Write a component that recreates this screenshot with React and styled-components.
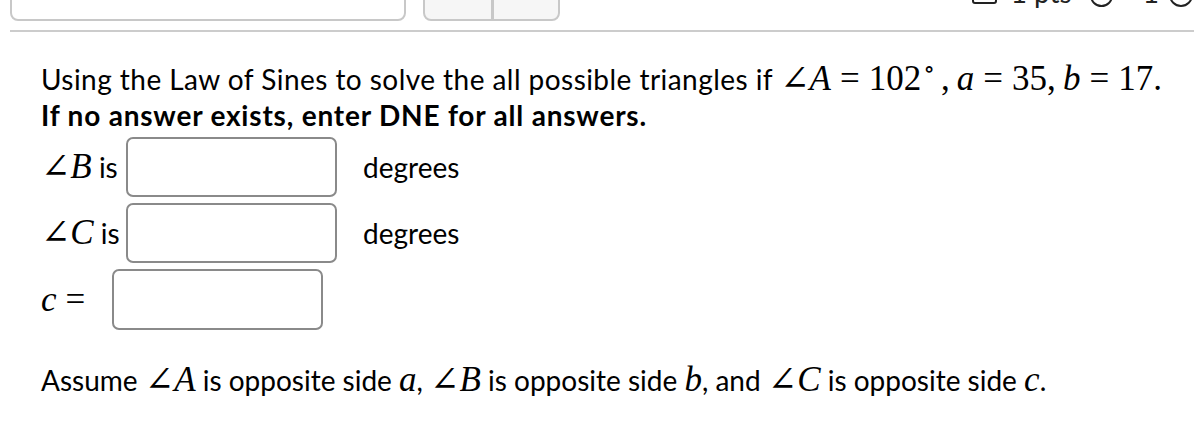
import React from 'react';
import styled, { createGlobalStyle } from 'styled-components';

const GlobalStyle = createGlobalStyle`
  body {
    margin: 0;
    background: #fff;
    color: #000;
    font-family: Lato, "Noto Sans", sans-serif;
  }
`;

const Page = styled.div`
  width: 1194px;
  height: 422px;
  overflow: hidden;
`;

const TopBar = styled.div`
  display: flex;
  align-items: flex-end;
  height: 21px;
  padding-left: 10px;
`;

const SelectBox = styled.div`
  width: 396px;
  height: 40px;
  flex-shrink: 0;
  border: 2px solid #c8c8c8;
  border-radius: 8px;
  background: #fff;
  box-sizing: border-box;
`;

const ButtonGroup = styled.div`
  display: flex;
  margin-left: 17px;
  height: 40px;
  flex-shrink: 0;
  border: 2px solid #c8c8c8;
  border-radius: 8px;
  overflow: hidden;
  box-sizing: border-box;
  background: #f6f6f6;
`;

const GroupButton = styled.div`
  width: ${p => p.w}px;
  border-left: ${p => (p.first ? 'none' : '3px solid #c8c8c8')};
`;

const Meta = styled.div`
  display: flex;
  align-items: flex-end;
  margin-left: auto;
  margin-right: 1px;
  height: 40px;
  margin-bottom: 15px;
  font-size: 28px;
  line-height: 28px;
  color: #222;
`;

const MetaItem = styled.span`
  margin-left: ${p => p.gap || 0}px;
  white-space: nowrap;
`;

const SquareIcon = styled.span`
  display: inline-block;
  width: 25px;
  height: 22px;
  border: 2px solid #222;
  border-radius: 3px;
  box-sizing: border-box;
  margin-bottom: 2px;
`;

const RingIcon = styled.span`
  display: inline-block;
  margin-left: ${p => p.gap || 0}px;
  width: ${p => p.size}px;
  height: ${p => p.size}px;
  border: 2px solid #222;
  border-radius: 50%;
  box-sizing: border-box;
  margin-bottom: -1px;
`;

const Divider = styled.hr`
  margin: 9px 0 0 10px;
  border: none;
  border-top: 2px solid #cccccc;
  height: 0;
`;

const Question = styled.div`
  padding: 29px 0 0 41px;
  font-size: 28px;
`;

const Prompt = styled.p`
  margin: 0;
  line-height: 36px;
`;

const Lead = styled.span`
  letter-spacing: 0.45px;
`;

const Strong = styled.span`
  font-weight: 700;
  letter-spacing: 0.8px;
`;

const M = styled.span`
  font-family: "Liberation Serif", "DejaVu Serif", serif;
  font-size: 35px;
  line-height: 0;
  letter-spacing: 0;
  font-style: ${p => (p.italic ? 'italic' : 'normal')};
  white-space: nowrap;
`;

const Rel = styled.span`
  display: inline-block;
  margin: 0 ${p => p.space ?? 9}px;
`;

const Sup = styled.span`
  font-size: 24px;
  position: relative;
  top: -13px;
  margin: 0 6px 0 2px;
`;

const Answers = styled.div`
  display: flex;
  flex-direction: column;
  gap: 6px;
  margin-top: 4px;
`;

const AnswerRow = styled.div`
  display: flex;
  align-items: center;
  height: ${p => p.h || 60}px;
`;

const Label = styled.span`
  width: ${p => p.w}px;
  flex-shrink: 0;
  white-space: nowrap;
`;

const AnswerInput = styled.input`
  width: 211px;
  height: ${p => p.h || 60}px;
  box-sizing: border-box;
  border: 2px solid #8a8a8a;
  border-radius: 7px;
  background: #fff;
  font: inherit;
  padding: 0 10px;
  outline: none;
`;

const Unit = styled.span`
  margin-left: 26px;
`;

const Note = styled.p`
  margin: 32px 0 0;
  line-height: 36px;
`;

const Angle = ({ v }) => (
  <M>
    ∠<M italic>{v}</M>
  </M>
);

export default function App() {
  return (
    <Page>
      <GlobalStyle />
      <TopBar>
        <SelectBox />
        <ButtonGroup>
          <GroupButton first w={66} />
          <GroupButton w={64} />
        </ButtonGroup>
        <Meta>
          <SquareIcon />
          <MetaItem gap={14}>1 pts</MetaItem>
          <RingIcon gap={18} size={23} />
          <MetaItem gap={30}>1</MetaItem>
          <RingIcon gap={10} size={24} />
        </Meta>
      </TopBar>
      <Divider />
      <Question>
        <Prompt>
          <Lead>Using the Law of Sines to solve the all possible triangles if </Lead>
          <Angle v="A" />
          <M>
            <Rel>=</Rel>102<Sup>∘</Sup>,
          </M>{' '}
          <M italic>a</M>
          <M>
            <Rel>=</Rel>35,
          </M>{' '}
          <M italic>b</M>
          <M>
            <Rel>=</Rel>17.
          </M>
          <br />
          <Strong>If no answer exists, enter DNE for all answers.</Strong>
        </Prompt>
        <Answers>
          <AnswerRow>
            <Label w={85}>
              <Angle v="B" /> is
            </Label>
            <AnswerInput aria-label="angle B" />
            <Unit>degrees</Unit>
          </AnswerRow>
          <AnswerRow>
            <Label w={85}>
              <Angle v="C" /> is
            </Label>
            <AnswerInput aria-label="angle C" />
            <Unit>degrees</Unit>
          </AnswerRow>
          <AnswerRow h={61}>
            <Label w={71}>
              <M italic>c</M>
              <M>
                <Rel>=</Rel>
              </M>
            </Label>
            <AnswerInput h={61} aria-label="side c" />
          </AnswerRow>
        </Answers>
        <Note>
          Assume <Angle v="A" /> is opposite side <M italic>a</M>, <Angle v="B" /> is opposite side{' '}
          <M italic>b</M>, and <Angle v="C" /> is opposite side <M italic>c</M>.
        </Note>
      </Question>
    </Page>
  );
}
